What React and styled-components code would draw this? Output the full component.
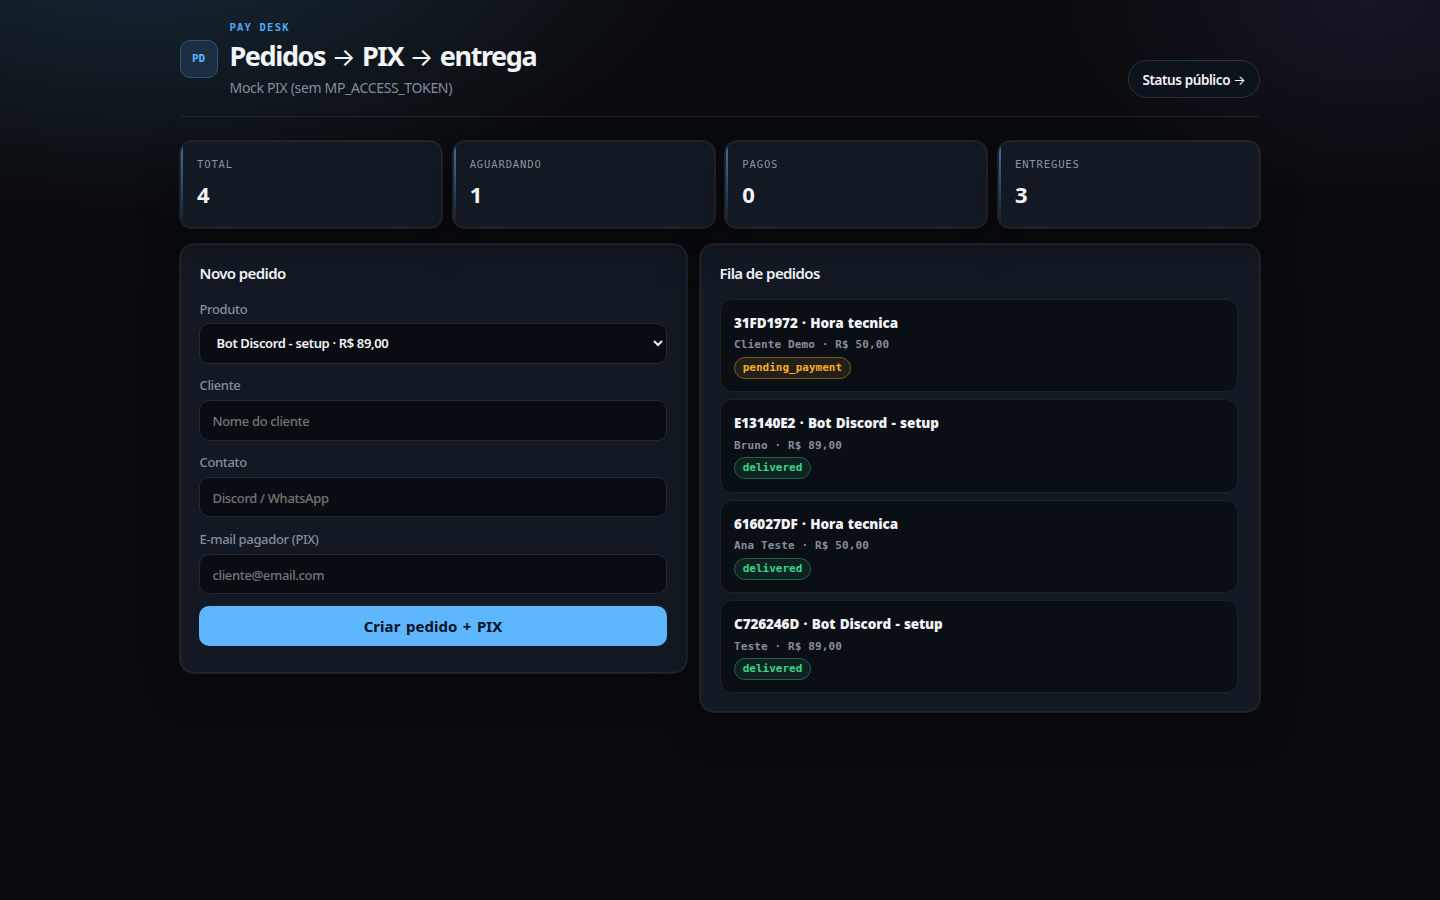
import React from 'react';
import styled, {createGlobalStyle} from 'styled-components';

const GlobalStyle = createGlobalStyle`
    * {
        box-sizing: border-box;
    }
    body {
        margin: 0;
        min-height: 900px;
        color: #f2f4f8;
        font-family: 'Noto Sans', 'Open Sans', sans-serif;
        background:
            radial-gradient(900px 480px at 10% -10%, rgba(75, 145, 195, 0.24), transparent 64%),
            radial-gradient(600px 380px at 95% 0%, rgba(105, 75, 165, 0.14), transparent 55%),
            #0a0b0e;
        background-repeat: no-repeat;
    }
`;

const mono = `font-family: 'DejaVu Sans Mono', monospace;`;

const Page = styled.div`
    width: 1080px;
    margin: 0 auto;
    padding-top: 18px;
`;

const Header = styled.header`
    display: flex;
    align-items: flex-end;
    justify-content: space-between;
    height: 99px;
    padding-bottom: 18px;
    border-bottom: 1px solid #20242b;
`;

const Brand = styled.div`
    display: flex;
    align-items: center;
    gap: 11.5px;
    height: 80px;
`;

const Logo = styled.div`
    display: flex;
    align-items: center;
    justify-content: center;
    width: 38px;
    height: 38px;
    margin-top: 2px;
    padding: 0 1px 2px 0;
    border: 1px solid #2f5478;
    border-radius: 10px;
    background: #1b2d40;
    color: #5eb6ff;
    font-size: 11px;
    font-weight: 700;
    ${mono}
`;

const Kicker = styled.div`
    height: 18px;
    line-height: 18px;
    color: #4ea8f5;
    font-size: 10.5px;
    font-weight: 700;
    letter-spacing: 1.2px;
    ${mono}
`;

const Title = styled.h1`
    margin: 0;
    height: 40px;
    line-height: 40px;
    font-size: 27px;
    font-weight: 700;
    letter-spacing: -1.4px;
    white-space: nowrap;
`;

const Arrow = styled.span`
    padding: 0 ${({$gap}) => $gap}px;
    font-family: Inter, sans-serif;
    font-size: ${({$size}) => $size}px;
    font-weight: 400;
    letter-spacing: 0;
    line-height: 1;
    vertical-align: 0.5px;
`;

const Subtitle = styled.div`
    height: 22px;
    line-height: 24px;
    color: #858d9b;
    font-size: 14px;
    letter-spacing: -0.32px;
`;

const StatusLink = styled.a`
    width: 132px;
    height: 38px;
    border: 1px solid #2c3036;
    border-radius: 19px;
    background: #0d131b;
    line-height: 38px;
    font-size: 13.5px;
    font-weight: 600;
    letter-spacing: -0.4px;
    text-align: center;
    white-space: nowrap;
`;

const Stats = styled.section`
    display: grid;
    grid-template-columns: repeat(4, 1fr);
    gap: 10.6px;
    margin-top: 24px;
`;

const surface = `
    border: 1px solid #25292f;
    background: #121922;
    box-shadow: 0 0 0 1px #1b1e23, 0 16px 40px rgba(0, 0, 0, 0.28);
`;

const Stat = styled.div`
    position: relative;
    height: 87px;
    padding: 13px 16px;
    border-radius: 12px;
    overflow: hidden;
    ${surface}

    &::before {
        content: '';
        position: absolute;
        left: 0;
        top: 0;
        bottom: 0;
        width: 2px;
        background: linear-gradient(#3d719f, #2b5072 45%, #121922);
    }
`;

const StatLabel = styled.div`
    height: 18px;
    line-height: 18px;
    color: #8b93a1;
    font-size: 10.5px;
    letter-spacing: 0.88px;
    ${mono}
`;

const StatValue = styled.div`
    margin-top: 6px;
    line-height: 30px;
    font-size: 22px;
    font-weight: 700;
`;

const Columns = styled.main`
    display: grid;
    grid-template-columns: 507px 560px;
    gap: 13px;
    align-items: start;
    margin-top: 16px;
`;

const Panel = styled.section`
    height: ${({height}) => height}px;
    padding: 17px ${({right}) => right}px 18px 18px;
    border-radius: 14px;
    ${surface}
`;

const PanelTitle = styled.h2`
    margin: 0 0 14px;
    height: 23px;
    padding-left: 0.6px;
    line-height: 23px;
    font-size: 15px;
    font-weight: 600;
    letter-spacing: -0.6px;
`;

const Field = styled.label`
    display: flow-root;
    height: 76.9px;
    color: #858d9b;
    font-size: 13px;
    font-weight: 500;
    letter-spacing: -0.35px;
`;

const FieldName = styled.span`
    display: block;
    height: 24.45px;
    margin-top: -0.45px;
    padding-left: 0.5px;
    line-height: 20px;
`;

const control = `
    display: block;
    width: 100%;
    height: 40.7px;
    padding: 1px 12.5px 0;
    border: 1px solid #262a30;
    border-radius: 10px;
    background: #090c12;
    color: #f2f4f8;
    font-family: inherit;
    font-size: 13px;
    letter-spacing: -0.35px;
    outline: none;
`;

const Input = styled.input`
    ${control}
    font-weight: 500;

    &::placeholder {
        color: #757575;
    }
`;

const Select = styled.select`
    ${control}
    padding: 0 12.5px;
    font-weight: 600;
`;

const Submit = styled.button`
    display: block;
    width: 100%;
    height: 40px;
    margin-top: -1px;
    padding: 0;
    border: 0;
    border-radius: 10px;
    background: #5eb6ff;
    color: #06121f;
    font-family: inherit;
    font-size: 15px;
    font-weight: 700;
    letter-spacing: 0.03px;
    word-spacing: 1.6px;
`;

const Queue = styled.div`
    display: grid;
    gap: 7.1px;
    padding-left: 1px;
`;

const Order = styled.article`
    height: 93.3px;
    padding: 12px 13px;
    border: 1px solid #1d2229;
    border-radius: 12px;
    background: #0a0e15;
`;

const OrderTitle = styled.div`
    height: 23.35px;
    line-height: 22px;
    font-family: 'Open Sans', 'Noto Sans', sans-serif;
    font-size: 13.5px;
    font-weight: 800;
    letter-spacing: -0.12px;
    word-spacing: 1px;
`;

const OrderMeta = styled.div`
    height: 21.65px;
    line-height: 20px;
    color: #858d9b;
    font-size: 11px;
    font-weight: 700;
    letter-spacing: 0.13px;
    ${mono}
`;

const Badge = styled.span`
    display: block;
    width: fit-content;
    height: 22px;
    padding: 0 7.7px;
    border: 1px solid ${({$pending}) => ($pending ? '#7b5a20' : '#216047')};
    border-radius: 11px;
    background: ${({$pending}) => ($pending ? '#241f18' : '#0e2320')};
    color: ${({$pending}) => ($pending ? '#f5ae25' : '#36d68a')};
    line-height: 19px;
    font-size: 11px;
    font-weight: 700;
    ${mono}
`;

const stats = [
    {label: 'TOTAL', value: 4},
    {label: 'AGUARDANDO', value: 1},
    {label: 'PAGOS', value: 0},
    {label: 'ENTREGUES', value: 3},
];

const fields = [
    {name: 'Cliente', placeholder: 'Nome do cliente'},
    {name: 'Contato', placeholder: 'Discord / WhatsApp'},
    {name: 'E-mail pagador (PIX)', placeholder: 'cliente@email.com'},
];

const orders = [
    {id: '31FD1972', product: 'Hora tecnica', client: 'Cliente Demo', price: '50,00', status: 'pending_payment'},
    {id: 'E13140E2', product: 'Bot Discord - setup', client: 'Bruno', price: '89,00', status: 'delivered'},
    {id: '616027DF', product: 'Hora tecnica', client: 'Ana Teste', price: '50,00', status: 'delivered'},
    {id: 'C726246D', product: 'Bot Discord - setup', client: 'Teste', price: '89,00', status: 'delivered'},
];

const App = () => {
    return (
        <>
            <GlobalStyle />
            <Page>
                <Header>
                    <Brand>
                        <Logo>PD</Logo>
                        <div>
                            <Kicker>PAY DESK</Kicker>
                            <Title>
                                Pedidos <Arrow $size={25} $gap={0.8}>→</Arrow> PIX <Arrow $size={25} $gap={0.8}>→</Arrow> entrega
                            </Title>
                            <Subtitle>Mock PIX (sem MP_ACCESS_TOKEN)</Subtitle>
                        </div>
                    </Brand>
                    <StatusLink>Status público <Arrow $size={13} $gap={0}>→</Arrow></StatusLink>
                </Header>
                <Stats>
                    {stats.map(({label, value}) => (
                        <Stat key={label}>
                            <StatLabel>{label}</StatLabel>
                            <StatValue>{value}</StatValue>
                        </Stat>
                    ))}
                </Stats>
                <Columns>
                    <Panel height={429} right={19}>
                        <PanelTitle>Novo pedido</PanelTitle>
                        <Field>
                            <FieldName>Produto</FieldName>
                            <Select>
                                <option>Bot Discord - setup · R$ 89,00</option>
                            </Select>
                        </Field>
                        {fields.map(({name, placeholder}) => (
                            <Field key={name}>
                                <FieldName>{name}</FieldName>
                                <Input placeholder={placeholder} />
                            </Field>
                        ))}
                        <Submit>Criar pedido + PIX</Submit>
                    </Panel>
                    <Panel height={468} right={21}>
                        <PanelTitle>Fila de pedidos</PanelTitle>
                        <Queue>
                            {orders.map(({id, product, client, price, status}) => (
                                <Order key={id}>
                                    <OrderTitle>{id} · {product}</OrderTitle>
                                    <OrderMeta>{client} · R$ {price}</OrderMeta>
                                    <Badge $pending={status === 'pending_payment'}>{status}</Badge>
                                </Order>
                            ))}
                        </Queue>
                    </Panel>
                </Columns>
            </Page>
        </>
    );
}
export default App;
